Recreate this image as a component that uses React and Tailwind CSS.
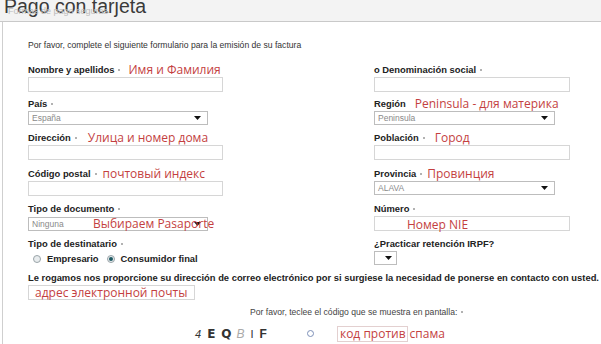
import React from 'react';

const red = 'text-[#c43f3f] font-["Open_Sans",sans-serif] text-[12px] leading-none whitespace-nowrap';

const Arrow = () => (
  <svg width="7" height="4" viewBox="0 0 7 4" className="shrink-0">
    <polygon points="0,0 7,0 3.5,4" fill="#111" />
  </svg>
);

const Dot = () => <span className="ml-[4px] w-[2px] h-[2px] rounded-full bg-[#999] shrink-0" />;

const Label = ({ text, dot = true, note, noteLeft }) => (
  <div className="h-[15px] flex items-center whitespace-nowrap">
    <span className="font-bold text-[9.4px] leading-none text-[#222]">{text}</span>
    {dot && <Dot />}
    {note && (
      <span className={red} style={{ marginLeft: noteLeft }}>
        {note}
      </span>
    )}
  </div>
);

const Input = ({ w, children }) => (
  <div
    className="h-[15px] border border-[#d6d6d6] bg-white flex items-center"
    style={{ width: w }}
  >
    {children}
  </div>
);

const Select = ({ w, value, children }) => (
  <div
    className="relative h-[14px] border border-[#bdbdbd] bg-white flex items-center justify-between pl-[3px] pr-[6px]"
    style={{ width: w }}
  >
    <span className="text-[8.5px] leading-none text-[#8a8a8a]">{value}</span>
    <Arrow />
    {children}
  </div>
);

const Radio = ({ checked }) => (
  <span className="w-[8px] h-[8px] rounded-full border border-[#9aa4a8] bg-[#e8ecee] flex items-center justify-center">
    {checked && <span className="w-[4px] h-[4px] rounded-full bg-[#1d5a63]" />}
  </span>
);

export default function App() {
  return (
    <div className="w-[601px] h-[344px] overflow-hidden bg-white text-[#333] font-['Liberation_Sans',Arial,sans-serif]">
      {/* header */}
      <div className="relative h-[22px] bg-[#f3f3f3] border-b border-[#c9c9c9] overflow-hidden">
        <div className="pl-[4px] -mt-[4px] text-[19.5px] leading-[20px] text-[#3a3a3a]">
          Pago con tarjeta
        </div>
        <span className="absolute left-[8px] top-[7px] text-[9px] leading-none text-[#bcbcbc]">
          Formas de pago seguras
        </span>
      </div>

      <div className="ml-[2px] border-l border-[#cfcfcf] h-full pl-[25px] pt-[17px]">
        <p className="text-[8.6px] leading-[12px] text-[#333]">
          Por favor, complete el siguiente formulario para la emisión de su factura
        </p>

        {/* row 1 */}
        <div className="mt-[11px] grid grid-cols-[346px_1fr]">
          <div>
            <Label text="Nombre y apellidos" note="Имя и Фамилия" noteLeft="8px" />
            <Input w="195px" />
          </div>
          <div>
            <Label text="o Denominación social" />
            <Input w="196px" />
          </div>
        </div>

        {/* row 2 */}
        <div className="mt-[4px] grid grid-cols-[346px_1fr]">
          <div>
            <Label text="País" />
            <Select w="180px" value="España" />
          </div>
          <div>
            <Label text="Región" dot={false} note="Peninsula - для материка" noteLeft="9px" />
            <Select w="181px" value="Peninsula" />
          </div>
        </div>

        {/* row 3 */}
        <div className="mt-[5px] grid grid-cols-[346px_1fr]">
          <div>
            <Label text="Dirección" note="Улица и номер дома" noteLeft="11px" />
            <Input w="195px" />
          </div>
          <div>
            <Label text="Población" note="Город" noteLeft="10px" />
            <Input w="196px" />
          </div>
        </div>

        {/* row 4 */}
        <div className="mt-[6px] grid grid-cols-[346px_1fr]">
          <div>
            <Label text="Código postal" note="почтовый индекс" noteLeft="6px" />
            <Input w="195px" />
          </div>
          <div>
            <Label text="Provincia" note="Провинция" noteLeft="5px" />
            <Select w="181px" value="ALAVA" />
          </div>
        </div>

        {/* row 5 */}
        <div className="mt-[5px] grid grid-cols-[346px_1fr]">
          <div>
            <Label text="Tipo de documento" />
            <div className="mt-[1px]">
              <Select w="180px" value="Ninguna">
                <span className={`${red} absolute left-[64px] top-[0px]`}>
                  Выбираем Pasaporte
                </span>
              </Select>
            </div>
          </div>
          <div>
            <Label text="Número" />
            <Input w="196px">
              <span className={`${red} ml-[32px] mt-[2px]`}>Номер NIE</span>
            </Input>
          </div>
        </div>

        {/* row 6 */}
        <div className="mt-[5px] grid grid-cols-[346px_1fr]">
          <div>
            <Label text="Tipo de destinatario" />
            <div className="h-[15px] flex items-center pl-[5px]">
              <Radio />
              <span className="ml-[6px] font-bold text-[9.4px] leading-none text-[#222]">Empresario</span>
              <span className="ml-[8px]"><Radio checked /></span>
              <span className="ml-[6px] font-bold text-[9.4px] leading-none text-[#222]">Consumidor final</span>
            </div>
          </div>
          <div>
            <Label text="¿Practicar retención IRPF?" dot={false} />
            <div className="h-[14px] w-[23px] border border-[#bdbdbd] flex items-center justify-end pr-[4px]">
              <Arrow />
            </div>
          </div>
        </div>

        {/* email */}
        <div className="mt-[5px] h-[14px] flex items-center font-bold text-[9.4px] leading-none text-[#222] whitespace-nowrap">
          Le rogamos nos proporcione su dirección de correo electrónico por si surgiese la necesidad de ponerse en contacto con usted.
        </div>
        <Input w="167px">
          <span className={`${red} ml-[6px]`}>адрес электронной почты</span>
        </Input>

        {/* captcha */}
        <div className="mt-[5px] h-[14px] flex items-center pl-[222px] text-[8.6px] leading-none text-[#444] whitespace-nowrap">
          Por favor, teclee el código que se muestra en pantalla:
          <Dot />
        </div>
        <div className="mt-[6px] h-[17px] flex items-center pl-[167px]">
          <div className="flex items-end gap-[5px] text-[#333] leading-none">
            <span className="italic text-[11px]">4</span>
            <span className="font-bold text-[12px] ml-[1px] font-['DejaVu_Sans',sans-serif]">E</span>
            <span className="font-bold text-[12px] ml-[1px] font-['DejaVu_Sans',sans-serif]">Q</span>
            <span className="italic text-[12px] text-[#aaa]">B</span>
            <span className="text-[11px] ml-[1px]">I</span>
            <span className="font-bold text-[12px] ml-[1px]">F</span>
          </div>
          <span className="ml-[40px] w-[7px] h-[7px] rounded-full border-[1.5px] border-[#7d90b8]" />
          <div className="ml-[23px] h-[16px] border border-[#e3d0d0] flex items-center pl-[2px] pr-[1px]">
            <span className={red}>код против</span>
          </div>
          <span className={`${red} ml-[2px]`}>спама</span>
        </div>
      </div>
    </div>
  );
}
